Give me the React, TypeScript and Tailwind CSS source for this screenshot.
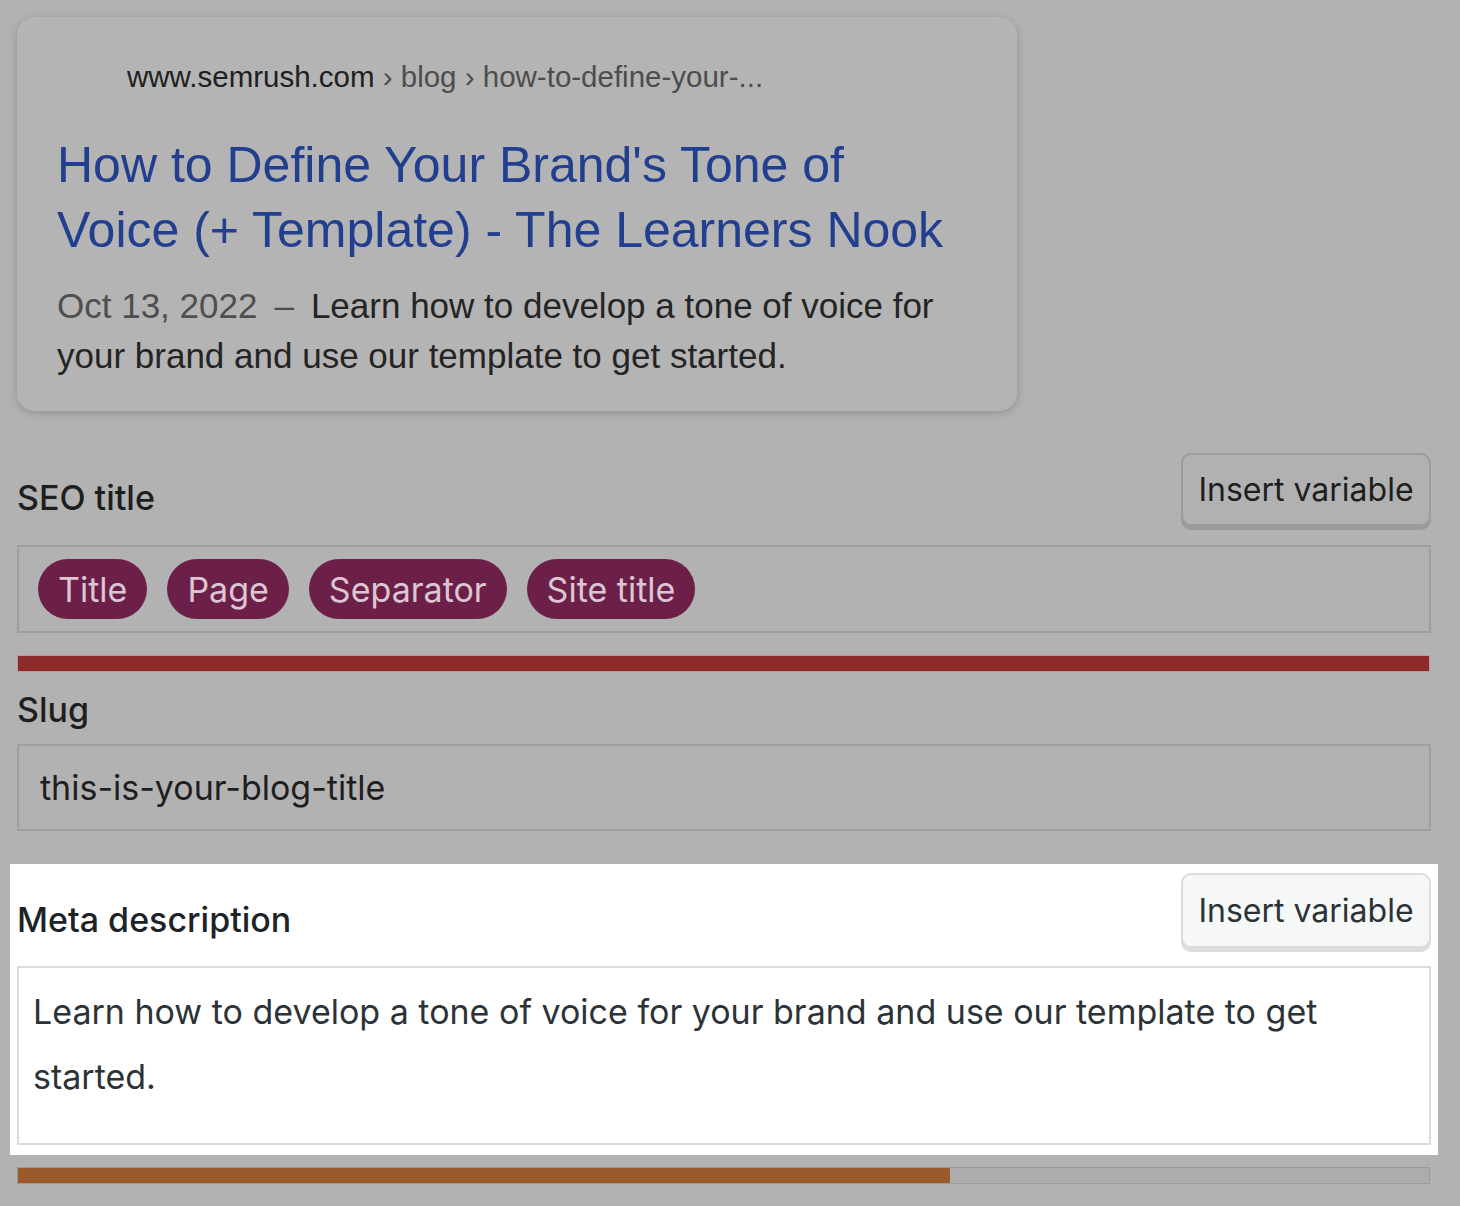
import React from "react";

const sys = { fontFamily: "Inter, 'Noto Sans', sans-serif" };
const arial = { fontFamily: "'Liberation Sans', Arial, sans-serif" };

function Pill({ label }: { label: string }) {
  return (
    <span className="inline-flex h-[60px] items-center rounded-full bg-[#6c1f48] px-[20px] text-[34px] text-[#dcc6d2]" style={sys}>
      {label}
    </span>
  );
}

export default function App() {
  return (
    <div className="relative h-[1206px] w-[1460px] overflow-hidden bg-[#b2b2b2]">
      <div className="ml-[17px] w-[1414px] pt-[17px]">
        {/* SERP preview card */}
        <div
          className="h-[394px] w-[1000px] rounded-[18px] bg-[#b4b4b4] pl-[40px] pt-[45px] shadow-[0_2px_8px_rgba(0,0,0,0.18)]"
          style={arial}
        >
          <div className="whitespace-nowrap pl-[70px] text-[29.5px] leading-[30px] text-[#202020]">
            www.semrush.com <span className="text-[#4d4d4d]">› blog › how-to-define-your-...</span>
          </div>
          <div className="mt-[41px] whitespace-nowrap text-[50px] leading-[65px] text-[#213f8e]">
            How to Define Your Brand's Tone of
            <br />
            Voice (+ Template) - The Learners Nook
          </div>
          <div className="mt-[18px] whitespace-nowrap text-[35px] leading-[50px] text-[#242424]">
            <span className="text-[#4e4e4e]">Oct 13, 2022</span>
            <span className="mx-[17px] inline-block text-[#4e4e4e]">–</span>Learn how to develop a tone of voice for
            <br />
            your brand and use our template to get started.
          </div>
        </div>

        {/* SEO title */}
        <div className="mt-[42px] flex items-start justify-between" style={sys}>
          <div className="mt-[25px] text-[34px] font-medium leading-[40px] text-[#1e1e1e]">SEO title</div>
          <button className="h-[73px] w-[250px] rounded-[10px] border-2 border-[#9c9c9c] bg-[#b1b1b1] text-[32px] text-[#1e1e1e] shadow-[0_4px_0_#9a9a9a]">
            Insert variable
          </button>
        </div>
        <div className="mt-[19px] flex h-[88px] items-center gap-[20px] border-2 border-[#9e9e9e] pl-[19px]">
          <Pill label="Title" />
          <Pill label="Page" />
          <Pill label="Separator" />
          <Pill label="Site title" />
        </div>
        <div className="mt-[22px] h-[17px] w-[1413px] border border-[#b59a9a] bg-[#8d2a2a]" />

        {/* Slug */}
        <div className="mt-[18px] text-[34px] font-medium leading-[40px] text-[#1e1e1e]" style={sys}>
          Slug
        </div>
        <div className="mt-[14px] flex h-[87px] items-center border-2 border-[#9e9e9e] pl-[21px] text-[34px] text-[#1e1e1e]" style={sys}>
          this-is-your-blog-title
        </div>

        {/* Meta description (highlighted) */}
        <div className="-mx-[7px] mt-[33px] bg-white px-[7px] pb-[10px] pt-[9px]" style={sys}>
          <div className="flex items-start justify-between">
            <div className="mt-[27px] text-[34px] font-medium leading-[40px] text-[#1d2327]">Meta description</div>
            <button className="h-[75px] w-[250px] rounded-[10px] border-2 border-[#dcdcde] bg-[#f6f7f7] text-[32px] text-[#2c3338] shadow-[0_4px_0_#dcdcde]">
              Insert variable
            </button>
          </div>
          <div className="mt-[18px] h-[179px] border-2 border-[#dcdcde] pl-[14px] pr-[20px] pt-[11px] text-[34px] leading-[65px] text-[#2c3338]">
            Learn how to develop a tone of voice for your brand and use our template to get
            <br />
            started.
          </div>
        </div>

        {/* progress bar */}
        <div className="mt-[12px] h-[17px] w-[1413px] border border-[#9a9a9a] bg-[#acacac]">
          <div className="h-full w-[932px] bg-[#9b5a2b]" />
        </div>
      </div>
    </div>
  );
}
